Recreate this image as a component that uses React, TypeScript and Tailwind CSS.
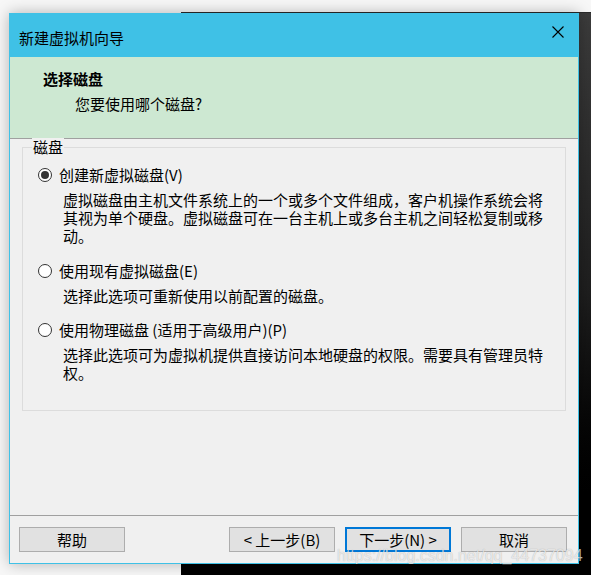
import React from "react";

const cjk = { fontFamily: '"Noto Sans CJK SC", "Noto Sans", sans-serif' };

function Radio({ checked }: { checked?: boolean }) {
  return (
    <span className="w-[14px] h-[14px] rounded-full border border-[#333333] bg-white flex items-center justify-center shrink-0">
      {checked && <span className="w-[8px] h-[8px] rounded-full bg-[#333333]" />}
    </span>
  );
}

function Option({
  label,
  lines,
  checked,
  className,
}: {
  label: string;
  lines: string[];
  checked?: boolean;
  className?: string;
}) {
  return (
    <div className={className}>
      <div className="flex items-center h-[18px] gap-[7px]">
        <Radio checked={checked} />
        <span className="text-[15px] leading-[18px] text-black">{label}</span>
      </div>
      <div className="ml-[25px] mt-[7px] text-[15px] leading-[18px] text-black">
        {lines.map((l, i) => (
          <div key={i} className="whitespace-nowrap h-[18px]">
            {l}
          </div>
        ))}
      </div>
    </div>
  );
}

function Button({ children, primary }: { children: React.ReactNode; primary?: boolean }) {
  return (
    <div
      className={
        "w-[106px] h-[25px] flex items-center justify-center bg-[#e1e1e1] text-[15px] leading-[18px] text-black " +
        (primary ? "border-2 border-[#0078d7]" : "border border-[#adadad]")
      }
    >
      {children}
    </div>
  );
}

export default function App() {
  return (
    <div className="w-[591px] h-[575px] relative overflow-hidden bg-[#f7f7f7]" style={cjk}>
      {/* window behind */}
      <div className="absolute left-[181px] top-[12px] right-0 bottom-0 bg-gradient-to-b from-[#3c3c3c] via-[#1e1e1e] to-black" />
      <div className="absolute left-[181px] top-[12px] right-0 h-[1px] bg-[#2a2a2a]" />

      {/* dialog */}
      <div className="absolute left-[9px] top-[13px] w-[570px] h-[551px] border border-[#3fc1e6] bg-[#f0f0f0] flex flex-col shadow-[0_0_14px_rgba(0,0,0,0.28)]">
        {/* title bar */}
        <div className="h-[43px] bg-[#3fc1e6] flex shrink-0">
          <div className="pl-[9px] pt-[15px] text-[15px] leading-[18px] text-black">新建虚拟机向导</div>
          <div className="ml-auto mr-[14px] mt-[12px] w-[12px] h-[12px]">
            <svg width="12" height="12" viewBox="0 0 12 12">
              <path d="M0.5 0.5 L11.5 11.5 M11.5 0.5 L0.5 11.5" stroke="#000" strokeWidth="1.1" fill="none" />
            </svg>
          </div>
        </div>

        {/* header */}
        <div className="h-[82px] bg-[#cde8d2] border-b border-[#a0a0a0] shrink-0 pl-[33px] pt-[13px]">
          <div className="text-[15px] leading-[18px] font-bold text-black">选择磁盘</div>
          <div className="ml-[32px] mt-[7px] text-[15px] leading-[18px] text-black">您要使用哪个磁盘?</div>
        </div>

        {/* body */}
        <div className="h-[376px] shrink-0 pt-[8px] px-[12px]">
          <div className="relative border border-[#dcdcdc] pt-[18px] pl-[15px] pb-[28px]">
            <span className="absolute left-[9px] top-[-10px] px-[1px] bg-[#f0f0f0] text-[15px] leading-[18px] text-black">
              磁盘
            </span>
            <Option
              checked
              label="创建新虚拟磁盘(V)"
              lines={[
                "虚拟磁盘由主机文件系统上的一个或多个文件组成，客户机操作系统会将",
                "其视为单个硬盘。虚拟磁盘可在一台主机上或多台主机之间轻松复制或移",
                "动。",
              ]}
            />
            <Option
              className="mt-[17px]"
              label="使用现有虚拟磁盘(E)"
              lines={["选择此选项可重新使用以前配置的磁盘。"]}
            />
            <Option
              className="mt-[16px]"
              label="使用物理磁盘 (适用于高级用户)(P)"
              lines={[
                "选择此选项可为虚拟机提供直接访问本地硬盘的权限。需要具有管理员特",
                "权。",
              ]}
            />
          </div>
        </div>

        {/* footer */}
        <div className="flex-1 border-t border-[#a0a0a0] pt-[11px] pl-[9px] pr-[11px] flex items-start">
          <Button>帮助</Button>
          <div className="ml-auto flex gap-[10px]">
            <Button>&lt; 上一步(B)</Button>
            <Button primary>下一步(N) &gt;</Button>
            <Button>取消</Button>
          </div>
        </div>
      </div>

      {/* watermark */}
      <div
        className="absolute left-[337px] top-[546px] text-[16px] leading-[20px] text-white/70 whitespace-nowrap"
        style={{ fontFamily: '"Liberation Sans", Arial, sans-serif', textShadow: "0 0 1px rgba(0,0,0,0.3)" }}
      >
        https://blog.csdn.net/qq_44737094
      </div>
    </div>
  );
}
